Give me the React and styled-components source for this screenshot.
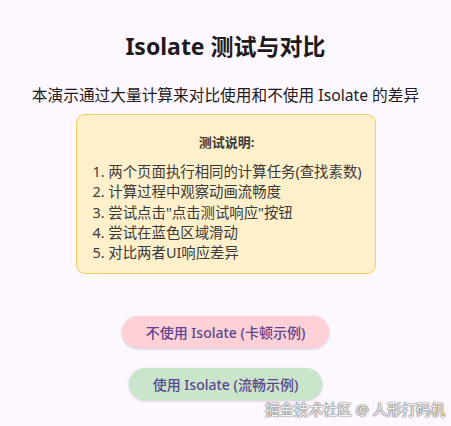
import React from 'react';
import styled, { createGlobalStyle } from 'styled-components';

const GlobalStyle = createGlobalStyle`
  html, body {
    margin: 0;
    padding: 0;
    background: #fdf7ff;
    font-family: "Noto Sans", "Noto Sans CJK SC", sans-serif;
  }
`;

const Page = styled.div`
  position: relative;
  width: 451px;
  height: 426px;
  overflow: hidden;
  display: flex;
  flex-direction: column;
  align-items: center;
  padding-top: 30px;
  box-sizing: border-box;
`;

const Title = styled.h1`
  margin: 0;
  font-size: 23px;
  line-height: 32px;
  font-weight: 700;
  color: #1d1b20;
`;

const Subtitle = styled.p`
  margin: 22px 0 0;
  font-size: 15.7px;
  line-height: 22px;
  color: #1d1b20;
  white-space: nowrap;
`;

const InfoBox = styled.div`
  margin-top: 8px;
  width: 300px;
  height: 160px;
  box-sizing: border-box;
  background: #fff0cc;
  border: 1px solid #f5cd5a;
  border-radius: 9px;
  padding: 18px 14px 0 16px;
  display: flex;
  flex-direction: column;
`;

const InfoTitle = styled.div`
  text-align: center;
  font-size: 13px;
  font-weight: 700;
  line-height: 18px;
  color: #3a3a3a;
`;

const Steps = styled.ol`
  list-style: none;
  margin: 11px 0 0;
  padding: 0;
`;

const Step = styled.li`
  font-size: 14.4px;
  line-height: 20.3px;
  color: #3a3a3a;
  white-space: nowrap;
`;

const Buttons = styled.div`
  margin-top: 42px;
  display: flex;
  flex-direction: column;
  align-items: center;
  gap: 20px;
`;

const PillButton = styled.button`
  height: 32px;
  padding: 0 24px;
  border: none;
  border-radius: 16px;
  background: ${p => p.$bg};
  color: #5b4690;
  font-family: inherit;
  font-size: 14px;
  font-weight: 500;
  box-shadow: 0 1px 3px rgba(0, 0, 0, 0.18);
  cursor: pointer;
`;

const Watermark = styled.div`
  position: absolute;
  right: 6px;
  bottom: 7px;
  font-size: 14.5px;
  color: #f4f4f4;
  text-shadow: 0 0 1px #666, 0 0 1px #666, 0 0 2px #888;
  white-space: nowrap;
`;

const steps = [
  '1. 两个页面执行相同的计算任务(查找素数)',
  '2. 计算过程中观察动画流畅度',
  '3. 尝试点击"点击测试响应"按钮',
  '4. 尝试在蓝色区域滑动',
  '5. 对比两者UI响应差异',
];

export default function App() {
  return (
    <>
      <GlobalStyle />
      <Page>
        <Title>Isolate 测试与对比</Title>
        <Subtitle>本演示通过大量计算来对比使用和不使用 Isolate 的差异</Subtitle>
        <InfoBox>
          <InfoTitle>测试说明:</InfoTitle>
          <Steps>
            {steps.map(s => (
              <Step key={s}>{s}</Step>
            ))}
          </Steps>
        </InfoBox>
        <Buttons>
          <PillButton $bg="#ffd0d6">不使用 Isolate (卡顿示例)</PillButton>
          <PillButton $bg="#c9e6ca">使用 Isolate (流畅示例)</PillButton>
        </Buttons>
        <Watermark>掘金技术社区 @ 人形打码机</Watermark>
      </Page>
    </>
  );
}
